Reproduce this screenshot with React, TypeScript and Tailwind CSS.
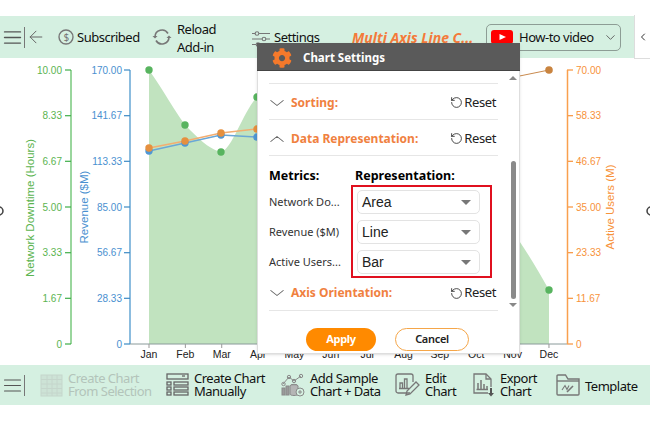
import { ArrowLeft, ChevronDown, ChevronLeft, ChevronUp, Menu, RotateCcw } from "lucide-react";
import { FaCog } from "react-icons/fa";

const yTicks = [70, 115.7, 161.3, 207, 252.7, 298.3, 344];
const greenLabels = ["10.00", "8.33", "6.67", "5.00", "3.33", "1.67", "0"];
const blueLabels = ["170.00", "141.67", "113.33", "85.00", "56.67", "28.33", "0"];
const orangeLabels = ["70.00", "58.33", "46.67", "35.00", "23.33", "11.67", "0"];
const months = ["Jan", "Feb", "Mar", "Apr", "May", "Jun", "Jul", "Aug", "Sep", "Oct", "Nov", "Dec"];

function Chart() {
    return (
        <svg viewBox="0 58 650 306" className="block w-[650px] h-[306px]" style={{ fontFamily: "'Liberation Sans', sans-serif" }}>
            <path d="M149 70 C165 92 178 118 190 130 C203 143 212 150 221 152 C232 150 243 112 257 97 L400 60 L500 214 C520 240 535 265 549 290 L549 344 L149 344 Z" fill="#c1e3bf" />
            {/* green axis */}
            <line x1="71" y1="70" x2="71" y2="344" stroke="#78c97d" strokeWidth="1.5" />
            {yTicks.map((y, i) => (
                <g key={y}>
                    <line x1="65" y1={y} x2="71" y2={y} stroke="#3fae49" strokeWidth="1.2" />
                    <text x="62" y={y + 3.5} textAnchor="end" fontSize="10" fill="#5bb450">{greenLabels[i]}</text>
                    <line x1="124" y1={y} x2="130" y2={y} stroke="#3b8ac4" strokeWidth="1.2" />
                    <text x="122" y={y + 3.5} textAnchor="end" fontSize="10" fill="#4a90d0">{blueLabels[i]}</text>
                    <line x1="567" y1={y} x2="573" y2={y} stroke="#f7923a" strokeWidth="1.2" />
                    <text x="576" y={y + 3.5} fontSize="10" fill="#f7923a">{orangeLabels[i]}</text>
                </g>
            ))}
            <line x1="130" y1="70" x2="130" y2="344" stroke="#3f8fc9" strokeWidth="1.2" />
            <line x1="130" y1="344" x2="567" y2="344" stroke="#8a9a9a" strokeWidth="1" />
            <line x1="567.5" y1="70" x2="567.5" y2="344" stroke="#f9a04e" strokeWidth="1.5" />
            <text transform="translate(34 208) rotate(-90)" textAnchor="middle" fontSize="11.5" fill="#5bb450">Network Downtime (Hours)</text>
            <text transform="translate(88 207) rotate(-90)" textAnchor="middle" fontSize="11.5" fill="#4a90d0">Revenue ($M)</text>
            <text transform="translate(614 207) rotate(-90)" textAnchor="middle" fontSize="11.5" fill="#f7923a">Active Users (M)</text>
            {months.map((m, i) => (
                <g key={m}>
                    <line x1={149 + i * 36.36} y1="344" x2={149 + i * 36.36} y2="348" stroke="#999" />
                    <text x={149 + i * 36.36} y="358" textAnchor="middle" fontSize="10.5" fill="#222">{m}</text>
                </g>
            ))}
            <polyline points="149,151 185,143 221,135 257,137" fill="none" stroke="#6aa7d6" strokeWidth="1.5" />
            <polyline points="149,148 185,141 221,133 257,129" fill="none" stroke="#f3ad70" strokeWidth="1.5" />
            {[[149, 151], [185, 143], [221, 135], [257, 137]].map(([x, y]) => (
                <circle key={x} cx={x} cy={y} r="3.7" fill="#4f97d4" />
            ))}
            {[[149, 148], [185, 141], [221, 133], [257, 129]].map(([x, y]) => (
                <circle key={x} cx={x} cy={y} r="3.7" fill="#e5903f" />
            ))}
            {[[149, 70], [185, 125], [221, 152], [257, 97], [549, 290]].map(([x, y]) => (
                <circle key={x} cx={x} cy={y} r="3.7" fill="#58b45f" />
            ))}
            <line x1="500" y1="80" x2="549" y2="70" stroke="#c98a4e" strokeWidth="1" />
            <circle cx="549" cy="70" r="3.8" fill="#c98440" />
            <circle cx="-1" cy="211" r="4" fill="none" stroke="#444" strokeWidth="1.5" />
            <circle cx="651" cy="211" r="4" fill="none" stroke="#444" strokeWidth="1.5" />
        </svg>
    );
}

function SettingRow({ title, open }: { title: string; open?: boolean }) {
    const Chevron = open ? ChevronUp : ChevronDown;
    return (
        <div className="flex items-center h-[35px] pt-[2px]">
            <Chevron size={20} strokeWidth={1} className="text-[#666] -ml-[2px] scale-x-125" />
            <span className="ml-[4px] text-[12px] font-bold text-[#f0813f]">{title}</span>
            <span className="ml-auto flex items-center text-[13px] tracking-[-0.4px] text-[#222] mr-[2px]">
                <RotateCcw size={13} strokeWidth={1.5} className="mr-[1px] text-[#222]" />
                Reset
            </span>
        </div>
    );
}

function FakeSelect({ label }: { label: string }) {
    return (
        <div className="h-[24px] w-[123px] bg-white border border-[#e3e3e3] rounded-[5px] flex items-center pl-[4px] pr-[8px] text-[14px] text-[#222]" style={{ fontFamily: "'Liberation Sans', sans-serif" }}>
            {label}
            <span className="ml-auto w-0 h-0 border-x-[5px] border-x-transparent border-t-[5px] border-t-[#777]" />
        </div>
    );
}

function ChartSettings() {
    return (
        <div className="absolute left-[257px] top-[43px] w-[263px] h-[311px] bg-white border-x border-b border-[#dedede] shadow-sm">
            <div className="h-[28px] -mx-px bg-[#5a5a5a] border-b border-[#444] flex items-center pl-[15px] pt-[2px]">
                <FaCog size={20} className="text-[#f4792b]" />
                <span className="ml-[11px] text-[11.5px] font-bold text-white">Chart Settings</span>
            </div>
            {/* scrollbar */}
            <div className="absolute right-[3px] top-[33px] w-[6px] h-[234px] flex flex-col items-center">
                <span className="w-0 h-0 border-x-[4px] border-x-transparent border-b-[4px] border-b-[#888]" />
                <span className="mt-[81px] w-[5px] h-[138px] rounded-full bg-[#8a8a8a]" />
                <span className="mt-[4px] w-0 h-0 border-x-[4px] border-x-transparent border-t-[4px] border-t-[#888]" />
            </div>
            <div className="ml-[11px] w-[229px]">
                <div className="h-[13px] border-b border-[#e6e6e6]" />
                <div className="border-b border-[#e6e6e6]"><SettingRow title="Sorting:" /></div>
                <div className="border-b border-[#e6e6e6]"><SettingRow title="Data Representation:" open /></div>
                <div className="flex mt-[12px] text-[12.5px] font-bold text-black leading-[16px]">
                    <span className="w-[86px]">Metrics:</span>
                    <span>Representation:</span>
                </div>
                <div className="flex mt-[1px] relative">
                    <div className="w-[83px] text-[11px] text-[#333] flex flex-col pt-[5px]">
                        <div className="h-[30px] leading-[24px]">Network Do...</div>
                        <div className="h-[30px] leading-[24px]">Revenue ($M)</div>
                        <div className="h-[30px] leading-[24px]">Active Users...</div>
                    </div>
                    <div className="border-2 border-[#e0101f] w-[141px] h-[93px] pl-[4px] pt-[3px] flex flex-col gap-[6px] -ml-[1px]">
                        <FakeSelect label="Area" />
                        <FakeSelect label="Line" />
                        <FakeSelect label="Bar" />
                    </div>
                </div>
                <div className="border-b border-[#e6e6e6] h-[31px] pb-[6px] flex flex-col justify-center"><SettingRow title="Axis Orientation:" /></div>
            </div>
            <div className="flex justify-center gap-[19px] mt-[17px] pr-[2px]">
                <button className="w-[70px] h-[23px] rounded-full bg-[#ff8a00] text-white text-[11px] font-bold tracking-[-0.3px]">Apply</button>
                <button className="w-[74px] h-[23px] rounded-full bg-white border border-[#f5a649] text-[#222] text-[11px] font-semibold tracking-[-0.3px]">Cancel</button>
            </div>
        </div>
    );
}

function BottomAction({ icon, lines, muted, className }: { icon: React.ReactNode; lines: string[]; muted?: boolean; className: string }) {
    return (
        <div className={`flex items-center shrink-0 ${className}`}>
            {icon}
            <div className={`ml-[5px] text-[13px] tracking-[-0.5px] leading-[13.5px] whitespace-nowrap ${muted ? "text-[#b3c4ba]" : "text-[#111]"} ${lines.length === 1 ? "pt-[3px]" : ""}`}>
                {lines[0]}
                {lines[1] && <br />}
                {lines[1]}
            </div>
        </div>
    );
}

export default function App() {
    const iconGray = "#777";
    return (
        <div className="relative w-[650px] h-[422px] bg-white overflow-hidden pt-4 text-[#111]" style={{ fontFamily: "'Noto Sans', sans-serif" }}>
            {/* top toolbar */}
            <div className="h-[42px] bg-[#d5f0e1] flex items-center text-[13px] tracking-[-0.5px]">
                <Menu size={19} strokeWidth={1.6} className="ml-[3px] text-[#555] scale-x-125" />
                <span className="ml-[2px] h-[21px] w-px bg-[#777]" />
                <ArrowLeft size={20} strokeWidth={1.2} className="ml-[1px] text-[#666]" />
                <svg width="16" height="16" viewBox="0 0 16 16" className="ml-[12px]" fill="none" stroke={iconGray}>
                    <circle cx="8" cy="8" r="7" strokeWidth="1.4" />
                    <text x="8" y="11.5" fontSize="10" textAnchor="middle" fill={iconGray} stroke="none">$</text>
                </svg>
                <span className="ml-[3px] w-[75px] pt-[2px]">Subscribed</span>
                <svg width="20" height="18" viewBox="0 0 20 18" fill="none" stroke={iconGray} strokeWidth="1.6">
                    <path d="M3 9 A7 7 0 0 1 16 5.5" />
                    <path d="M17 9 A7 7 0 0 1 4 12.5" />
                    <path d="M0.5 8 L3 10.5 L5.5 8" fill={iconGray} stroke="none" />
                    <path d="M14.5 10 L17 7.5 L19.5 10" fill={iconGray} stroke="none" />
                </svg>
                <div className="ml-[5px] leading-[18px] w-[75px] pt-[1px]">Reload<br />Add-in</div>
                <svg width="18" height="18" viewBox="0 0 18 18" className="mt-[3px]" fill="none" stroke={iconGray} strokeWidth="1.1">
                    <path d="M0 3.5H3M7 3.5H18M0 9H10M14 9H18M0 14.5H4M8 14.5H18" />
                    <circle cx="5" cy="3.5" r="1.8" />
                    <circle cx="12" cy="9" r="1.8" />
                    <circle cx="6" cy="14.5" r="1.8" />
                </svg>
                <span className="ml-[4px] w-[78px] pt-[2px]">Settings</span>
                <span className="w-[134px] whitespace-nowrap text-[14px] tracking-normal font-bold italic text-[#f47a3a]">Multi Axis Line C...</span>
                <div className="w-[135px] h-[27px] border border-[#8d9d95] rounded-[5px] flex items-center pl-[4px]">
                    <svg width="22" height="14" viewBox="0 0 22 14">
                        <rect width="22" height="14" rx="3" fill="#f00" />
                        <path d="M8.5 4 L15 7 L8.5 10 Z" fill="#fff" />
                    </svg>
                    <span className="ml-[6px] pt-[1px]">How-to video</span>
                    <ChevronDown size={15} strokeWidth={1.4} className="ml-auto mr-[2px] text-[#555]" />
                </div>
                <div className="ml-auto w-[16px] h-[44px] -mt-[2px] mb-[-2px] bg-white border-l border-b border-[#ddd] flex items-center justify-center">
                    <ChevronLeft size={12} strokeWidth={2} className="text-[#333]" />
                </div>
            </div>

            <Chart />

            {/* bottom toolbar */}
            <div className="mt-px h-[40px] bg-[#d5f0e1] flex items-center">
                <Menu size={19} strokeWidth={1.4} className="ml-[3px] text-[#555] scale-x-125" />
                <span className="ml-[2px] h-[21px] w-px bg-[#777]" />
                <BottomAction
                    className="ml-[15px] w-[126px]"
                    muted
                    lines={["Create Chart", "From Selection"]}
                    icon={
                        <svg width="23" height="23" viewBox="0 0 23 23" fill="none" stroke="#c5d6cc">
                            <rect x="1" y="1" width="21" height="21" fill="#c5d6cc" fillOpacity="0.5" />
                            <path d="M1 5.5H22M1 10H22M1 14.5H22M1 19H22M7 1V22M12 1V22M17 1V22" />
                        </svg>
                    }
                />
                <BottomAction
                    className="w-[115px]"
                    lines={["Create Chart", "Manually"]}
                    icon={
                        <svg width="23" height="24" viewBox="0 0 23 24" fill="none" stroke="#666" strokeWidth="1.3">
                            <rect x="1" y="1" width="21" height="5" />
                            <path d="M16 3h3" />
                            <rect x="1" y="9" width="4" height="3" />
                            <rect x="8" y="9" width="14" height="3" />
                            <rect x="1" y="14" width="4" height="3" />
                            <rect x="8" y="14" width="14" height="3" />
                            <rect x="1" y="19" width="4" height="3" />
                            <rect x="8" y="19" width="14" height="3" />
                        </svg>
                    }
                />
                <BottomAction
                    className="w-[113px]"
                    lines={["Add Sample", "Chart + Data"]}
                    icon={
                        <svg width="24" height="24" viewBox="0 0 24 24" fill="none" stroke="#8a8a8a" strokeWidth="1">
                            <path d="M2 11L8 4L13 8L20 3" />
                            <circle cx="2.5" cy="11" r="1.7" />
                            <circle cx="8" cy="4" r="1.7" />
                            <circle cx="13" cy="8" r="1.7" />
                            <circle cx="20" cy="3" r="1.7" />
                            <rect x="1" y="15" width="3" height="7" fill="#9a9a9a" />
                            <rect x="5" y="13" width="3" height="9" fill="#9a9a9a" />
                            <ellipse cx="13" cy="13" rx="4" ry="1.7" fill="#aaa" />
                            <path d="M9 13V21C9 23 17 23 17 21V13" fill="#b5b5b5" />
                            <circle cx="19" cy="19" r="4" fill="#d5f0e1" />
                            <path d="M19 17V21M17 19H21" />
                        </svg>
                    }
                />
                <BottomAction
                    className="w-[79px]"
                    lines={["Edit", "Chart"]}
                    icon={
                        <svg width="26" height="24" viewBox="0 0 26 24" fill="none" stroke="#777" strokeWidth="1.3">
                            <path d="M16 20H4a2 2 0 0 1-2-2V3a2 2 0 0 1 2-2h13a2 2 0 0 1 2 2v6" />
                            <path d="M6 15V10H8.5V15M10.5 15V6H13V15M5 15.5H15" />
                            <path d="M12 22L13 18L22 9L25 12L16 21Z" />
                        </svg>
                    }
                />
                <BottomAction
                    className="w-[83px]"
                    lines={["Export", "Chart"]}
                    icon={
                        <svg width="22" height="24" viewBox="0 0 22 24" fill="none" stroke="#777" strokeWidth="1.3">
                            <path d="M15 20H1V1H13L18 6V14" />
                            <path d="M13 1V6H18" />
                            <path d="M5 16V10M8 16V7M11 16V11M14 16V13M3.5 16.5H15" strokeWidth="1.5" />
                            <path d="M18 15V21" strokeWidth="2" stroke="#555" />
                            <path d="M15 20L18 23.5L21 20Z" fill="#555" stroke="none" />
                        </svg>
                    }
                />
                <BottomAction
                    className=""
                    lines={["Template"]}
                    icon={
                        <svg width="24" height="24" viewBox="0 0 24 24" fill="none" stroke="#777" strokeWidth="1.4">
                            <path d="M1 21a1 1 0 0 0 1 1H22a1 1 0 0 0 1-1V6H12L9.5 2H2a1 1 0 0 0-1 1Z" />
                            <path d="M1 8H23" />
                            <path d="M6 17L9 12.5L11 16.5L13 12.5" strokeWidth="1.1" />
                            <path d="M11 19L17 13" strokeWidth="1.6" />
                        </svg>
                    }
                />
            </div>

            <ChartSettings />
        </div>
    );
}
